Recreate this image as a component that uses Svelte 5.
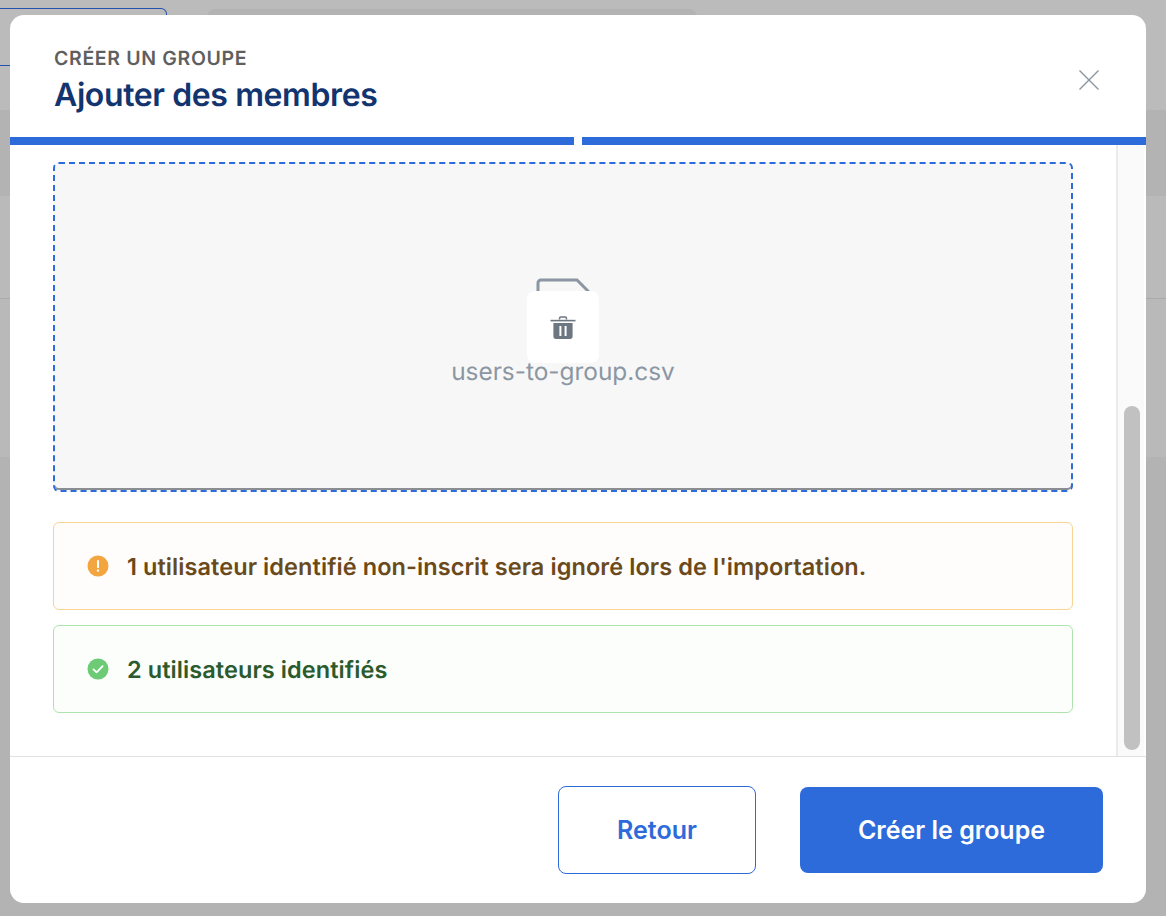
<script>
  let fileName = 'users-to-group.csv';
</script>

<div class="page">
  <div class="bands">
    <div class="band top">
      <div class="ghost-btn"></div>
      <div class="ghost-search"></div>
    </div>
    <div class="band head"></div>
    <div class="band row"></div>
    <div class="band row2"></div>
    <div class="band rest"></div>
  </div>

  <div class="modal" role="dialog">
    <header>
      <div>
        <div class="eyebrow">Créer un groupe</div>
        <h1>Ajouter des membres</h1>
      </div>
      <button class="close" aria-label="Fermer">
        <svg width="22" height="22" viewBox="0 0 22 22"><path d="M1.5 1.5l19 19M20.5 1.5l-19 19" stroke="#8b95a0" stroke-width="1.4" fill="none" /></svg>
      </button>
    </header>

    <div class="steps"><span></span><span></span></div>

    <div class="scroller">
      <div class="content">
        <div class="drop">
          <div class="file">
            <svg class="doc" width="56" height="40" viewBox="0 0 56 40"><path d="M3 38V5a3 3 0 0 1 3-3h36l11 11v25" fill="none" stroke="#8b96a3" stroke-width="3" /></svg>
            <div class="tile">
              <svg width="26" height="26" viewBox="0 0 26 26">
                <path d="M9.5 4.5V3.4c0-.8.6-1.4 1.4-1.4h4.2c.8 0 1.4.6 1.4 1.4v1.1" fill="none" stroke="#6d7782" stroke-width="1.5" />
                <path d="M.5 5.6h25" stroke="#6d7782" stroke-width="1.6" />
                <path fill-rule="evenodd" d="M3.4 8h19.2v13.6c0 1.4-1 2.4-2.4 2.4H5.8c-1.4 0-2.4-1-2.4-2.4zM9.4 11v10h2v-10zm5.2 0v10h2v-10z" fill="#6d7782" />
              </svg>
            </div>
            <div class="name">{fileName}</div>
          </div>
        </div>

        <div class="alert warn">
          <svg width="22" height="22" viewBox="0 0 22 22"><circle cx="11" cy="11" r="10.5" fill="#f3a540" /><path d="M11 6v6.2" stroke="#fff" stroke-width="2" stroke-linecap="round" /><circle cx="11" cy="15.6" r="1.2" fill="#fff" /></svg>
          <span>1 utilisateur identifié non-inscrit sera ignoré lors de l'importation.</span>
        </div>
        <div class="alert ok">
          <svg width="22" height="22" viewBox="0 0 22 22"><circle cx="11" cy="11" r="10.5" fill="#6ccb74" /><path d="M6.5 11.4l3.1 3 6-6.2" stroke="#fff" stroke-width="1.8" fill="none" stroke-linecap="round" stroke-linejoin="round" /></svg>
          <span>2 utilisateurs identifiés</span>
        </div>
      </div>
      <div class="track"><div class="thumb"></div></div>
    </div>

    <footer>
      <button class="btn back">Retour</button>
      <button class="btn primary">Créer le groupe</button>
    </footer>
  </div>
</div>

<style>
  :global(body) { margin: 0; background: #b3b3b3; font-family: Inter, "Liberation Sans", sans-serif; text-rendering: geometricPrecision; }
  .page { position: relative; width: 1166px; height: 916px; overflow: hidden; }
  .bands { display: flex; flex-direction: column; height: 100%; }
  .band.top { height: 110px; background: #bbbbbb; position: relative; display: flex; gap: 40px; }
  .ghost-btn { width: 167px; height: 58px; margin-top: 8px; box-sizing: border-box; border: 1px solid #2253ad; border-left: 0; border-radius: 0 6px 6px 0; }
  .ghost-search { width: 490px; height: 40px; margin-top: 9px; background: #b3b3b3; border-radius: 8px; }
  .band.head { height: 86px; background: #b3b3b3; }
  .band.row { height: 103px; background: #bababa; border-bottom: 1px solid #aaaaaa; box-sizing: border-box; }
  .band.row2 { height: 158px; background: #b9b9b9; }
  .band.rest { flex: 1; background: #b3b3b3; }

  .modal { position: absolute; left: 10px; top: 15px; width: 1136px; height: 888px; background: #fff; border-radius: 14px; overflow: hidden; display: flex; flex-direction: column; }
  header { height: 122px; box-sizing: border-box; padding: 32px 44px 0; display: flex; justify-content: space-between; }
  .eyebrow { font-size: 19.5px; line-height: 22px; font-weight: 600; letter-spacing: 0.65px; color: #5f5f5f; text-transform: uppercase; }
  h1 { margin: 6px 0 0; font-size: 32px; line-height: 40px; font-weight: 600; color: #12346f; letter-spacing: -0.4px; }
  .close { background: none; border: 0; padding: 0; margin: 22px 2px 0 0; height: 22px; cursor: pointer; }
  .close svg { display: block; }

  .steps { display: flex; gap: 8px; height: 8px; flex: none; }
  .steps span { flex: 1; background: #2d6ada; }

  .scroller { flex: 1; min-height: 0; display: flex; }
  .content { flex: 1; padding: 17px 43px 0; display: flex; flex-direction: column; }
  .track { width: 28px; box-sizing: border-box; border-left: 2px solid #ebebeb; background: #fafafa; margin-right: 2px; padding: 261px 4px 0 6px; }
  .thumb { height: 344px; background: #c1c1c1; border-radius: 8px; }

  .drop { height: 330px; box-sizing: border-box; border: 2px dashed #2d6ada; border-radius: 6px; background: #f7f7f7; box-shadow: inset 0 -2px 0 #8a8d91; display: flex; justify-content: center; }
  .file { position: relative; display: flex; flex-direction: column; align-items: center; padding-top: 114px; }
  .doc { display: block; }
  .tile { position: absolute; left: 50%; top: 127px; transform: translateX(-50%); width: 72px; height: 72px; background: #fff; border-radius: 8px; display: flex; align-items: center; justify-content: center; }
  .tile svg { display: block; margin-top: 1px; }
  .name { margin-top: 38px; font-size: 24.4px; line-height: 30px; color: #8a96a3; }

  .alert { height: 88px; box-sizing: border-box; border: 1px solid; border-radius: 6px; display: flex; align-items: center; gap: 18px; padding-left: 33px; font-size: 23.5px; font-weight: 600; letter-spacing: 0.08px; }
  .alert svg { flex: none; }
  .warn { margin-top: 30px; background: #fffdfb; border-color: #f8d493; color: #6a4a1b; }
  .ok { margin-top: 15px; background: #fcfefc; border-color: #aee3ad; color: #2b5a2c; }

  footer { height: 147px; flex: none; box-sizing: border-box; border-top: 1px solid #dfe1e4; padding: 29px 43px 0 0; display: flex; justify-content: flex-end; align-items: flex-start; gap: 44px; }
  .btn { font-family: inherit; font-size: 25px; font-weight: 600; border-radius: 8px; cursor: pointer; }
  .back { width: 198px; height: 88px; background: #fff; color: #2d6ada; border: 1px solid #2d6ada; }
  .primary { width: 303px; height: 86px; margin-top: 1px; background: #2d6ada; color: #fff; border: 0; }
</style>
